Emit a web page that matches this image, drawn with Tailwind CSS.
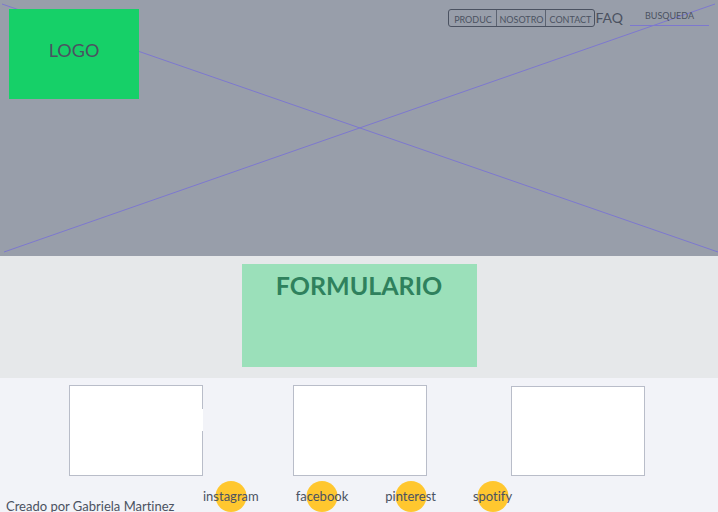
<!DOCTYPE html>
<html lang="es">
<head>
<meta charset="utf-8">
<meta name="viewport" content="width=device-width, initial-scale=1">
<title>Inicio</title>
<script src="https://cdn.jsdelivr.net/npm/@tailwindcss/browser@4"></script>
</head>
<body class="h-screen overflow-hidden bg-[#f2f3f8] font-[Lato,sans-serif] text-[#4b5261] [font-variant-ligatures:none]">
  <header class="relative flex min-h-64 items-start justify-between bg-[#989eaa] px-[9px] pt-[9px]">
    <!-- Crossed banner placeholder -->
    <svg class="absolute inset-0 h-full w-full" viewBox="0 0 718 256" preserveAspectRatio="none" fill="none" stroke="#7d78cf" stroke-width="1" aria-hidden="true">
      <path d="M2 4L718 252M4 252L715 4"/>
    </svg>
    <a href="#" class="relative flex h-[90px] w-[130px] justify-center bg-[#16d068] pt-[29px] text-lg leading-6">LOGO</a>
    <div class="relative flex items-start">
      <nav class="flex items-start" aria-label="Principal">
        <div class="flex h-[18px] divide-x divide-[#5c6371] rounded-[3px] border border-[#4b5261] text-[9px] leading-[19px]">
          <a href="#" class="w-12 text-center">PRODUC</a>
          <a href="#" class="w-[49px] text-center">NOSOTRO</a>
          <a href="#" class="w-12 text-center">CONTACT</a>
        </div>
        <a href="#" class="text-sm leading-[18px]">FAQ</a>
      </nav>
      <input type="text" aria-label="Búsqueda" placeholder="BUSQUEDA" class="ml-[7px] h-[17px] w-[79px] border-b border-[#7d78cf] pb-1 text-center text-[9px] leading-3 outline-none placeholder:text-[#4b5261]">
    </div>
  </header>
  <main>
    <section class="flex justify-center bg-[#e6e8ea] pt-2 pb-[11px]">
      <h1 class="h-[103px] w-[235px] bg-[#9be0ba] pt-1 text-center text-[25px] leading-[34px] font-bold text-[#2f815d]">FORMULARIO</h1>
    </section>
    <section class="grid grid-cols-[224fr_218fr_207fr] items-end pt-[7px] pl-[69px]">
      <div class="relative h-[91px] w-[134px] border border-[#b9bdc9] bg-white">
        <span class="absolute top-[23px] -right-px h-[22px] w-px bg-white"></span>
      </div>
      <div class="h-[91px] w-[134px] border border-[#b9bdc9] bg-white"></div>
      <div class="h-[90px] w-[134px] border border-[#b9bdc9] bg-white"></div>
    </section>
  </main>
  <footer class="flex items-start pt-[5px] pl-1.5 text-[13px]">
    <p class="w-[197px] pt-[15px] leading-5">Creado por Gabriela Martinez</p>
    <nav class="flex gap-[37px] leading-[31px]" aria-label="Redes sociales">
      <a href="#" class="relative isolate"><span class="absolute inset-y-0 left-1/2 -z-10 size-[31px] -translate-x-1/2 rounded-full bg-[#ffc72f]"></span>instagram</a>
      <a href="#" class="relative isolate"><span class="absolute inset-y-0 left-1/2 -z-10 size-[31px] -translate-x-1/2 rounded-full bg-[#ffc72f]"></span>facebook</a>
      <a href="#" class="relative isolate"><span class="absolute inset-y-0 left-1/2 -z-10 size-[31px] -translate-x-1/2 rounded-full bg-[#ffc72f]"></span>pinterest</a>
      <a href="#" class="relative isolate"><span class="absolute inset-y-0 left-1/2 -z-10 size-[31px] -translate-x-1/2 rounded-full bg-[#ffc72f]"></span>spotify</a>
    </nav>
  </footer>
</body>
</html>
